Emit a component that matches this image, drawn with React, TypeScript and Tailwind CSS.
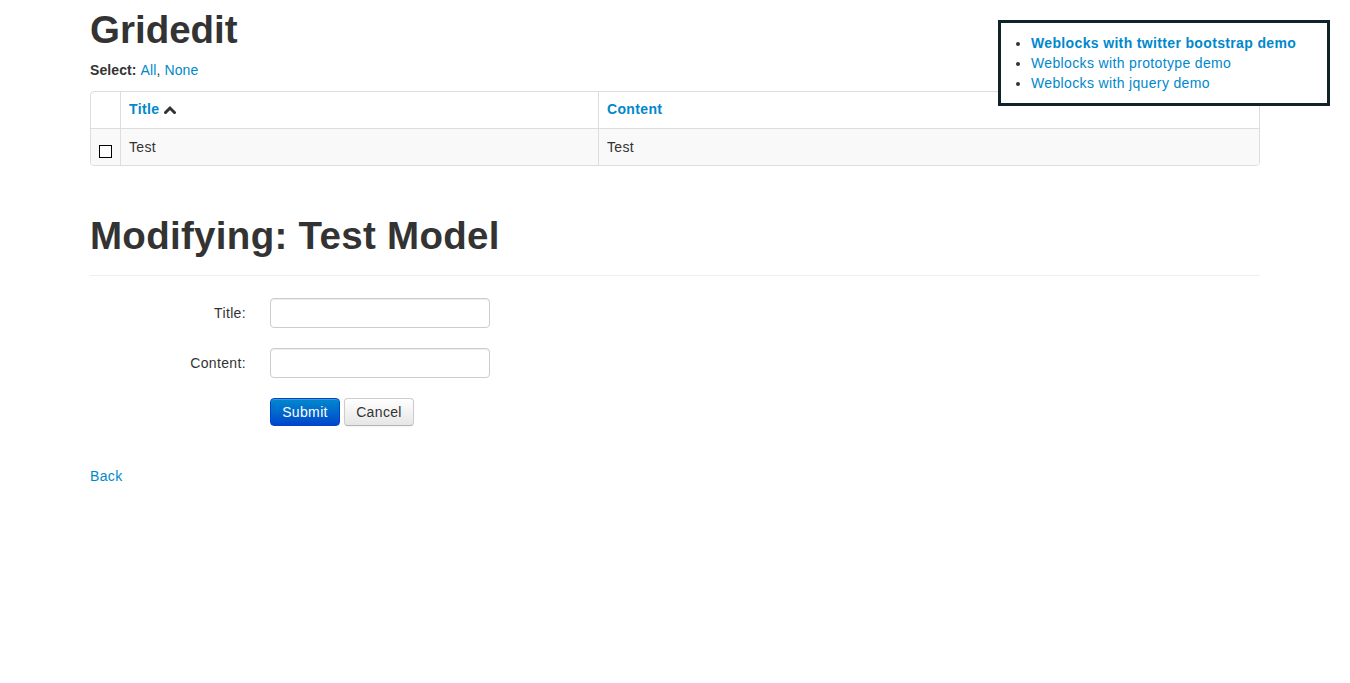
import { useState } from "react";

const demos = [
  { label: "Weblocks with twitter bootstrap demo", active: true },
  { label: "Weblocks with prototype demo", active: false },
  { label: "Weblocks with jquery demo", active: false },
];

const ChevronUp = () => (
  <svg width="12" height="9" viewBox="0 0 12 9" className="ml-[5px] inline-block">
    <polyline
      points="1.5,7.5 6,3 10.5,7.5"
      fill="none"
      stroke="#333"
      strokeWidth="3"
      strokeLinecap="square"
    />
  </svg>
);

const App = () => {
  const [checked, setChecked] = useState(false);

  return (
    <div className="relative min-h-[683px] bg-white font-['Liberation_Sans',Arial,sans-serif] text-[14px] leading-5 tracking-[0.35px] text-[#333]">
      <div className="mx-auto flex w-[1170px] flex-col items-stretch">
        <h1 className="my-[10px] text-[38.5px] font-bold leading-10 tracking-normal">Gridedit</h1>

        <p className="mb-[11px] tracking-[0.1px]">
          <b>Select: </b>
          <a className="text-[#0088cc]" href="#">All</a>,{" "}
          <a className="text-[#0088cc]" href="#">None</a>
        </p>

        <div className="mb-5 overflow-hidden rounded border border-[#ddd]">
          <div className="grid grid-cols-[29px_478px_1fr]">
            <div className="h-9" />
            <div className="flex items-center border-l border-[#ddd] px-2 pb-[2px] font-bold text-[#0088cc]">
              Title
              <ChevronUp />
            </div>
            <div className="flex items-center border-l border-[#ddd] px-2 pb-[2px] font-bold text-[#0088cc]">
              Content
            </div>
          </div>
          <div className="grid grid-cols-[29px_478px_1fr] border-t border-[#ddd] bg-[#f9f9f9]">
            <div className="flex h-9 items-end justify-center pb-[7px]">
              <input
                type="checkbox"
                checked={checked}
                onChange={() => setChecked(!checked)}
                className="h-[13px] w-[13px] appearance-none border border-black bg-white"
              />
            </div>
            <div className="flex items-center border-l border-[#ddd] px-2">Test</div>
            <div className="flex items-center border-l border-[#ddd] px-2">Test</div>
          </div>
        </div>

        <div className="mt-[20px] border-b border-[#eee] pb-[9px] pt-[10px]">
          <h1 className="mb-[10px] text-[38.5px] font-bold leading-10 tracking-[0.3px]">
            Modifying: Test Model
          </h1>
        </div>

        <form className="mt-[22px]" onSubmit={(e) => e.preventDefault()}>
          <div className="mb-5 flex items-center">
            <label className="w-[156px] text-right">Title:</label>
            <input
              type="text"
              className="ml-6 h-[30px] w-[220px] rounded border border-[#ccc] bg-white px-[6px] shadow-[inset_0_1px_1px_rgba(0,0,0,0.075)] outline-none"
            />
          </div>
          <div className="mb-5 flex items-center">
            <label className="w-[156px] text-right">Content:</label>
            <input
              type="text"
              className="ml-6 h-[30px] w-[220px] rounded border border-[#ccc] bg-white px-[6px] shadow-[inset_0_1px_1px_rgba(0,0,0,0.075)] outline-none"
            />
          </div>
          <div className="ml-[180px] flex gap-1">
            <button
              type="submit"
              className="h-7 w-[70px] rounded border border-[#0044cc] bg-gradient-to-b from-[#0088cc] to-[#0044cc] text-white shadow-[inset_0_1px_0_rgba(255,255,255,0.2)]"
            >
              Submit
            </button>
            <button
              type="button"
              className="h-7 w-[70px] rounded border border-[#ccc] border-b-[#b3b3b3] bg-gradient-to-b from-white to-[#e6e6e6] text-[#333] shadow-[0_1px_2px_rgba(0,0,0,0.05)]"
            >
              Cancel
            </button>
          </div>
        </form>

        <div className="mt-[40px]">
          <a className="text-[#0088cc]" href="#">Back</a>
        </div>
      </div>

      <div className="absolute right-[20px] top-[20px] w-[332px] border-[3px] border-[#0f2429] bg-white px-[10px] py-[10px]">
        <ul className="list-disc pl-5 marker:text-[#333]">
          {demos.map((d) => (
            <li key={d.label}>
              <a href="#" className={`text-[#0088cc] ${d.active ? "font-bold" : ""}`}>
                {d.label}
              </a>
            </li>
          ))}
        </ul>
      </div>
    </div>
  );
};

export default App;
